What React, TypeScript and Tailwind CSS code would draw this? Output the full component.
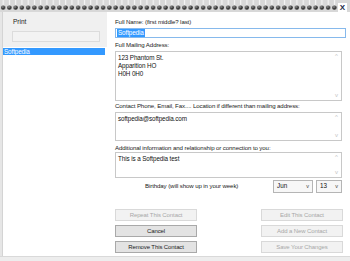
import { ReactNode } from 'react';

const Spiral = () => (
  <svg width="338" height="12" className="block">
    <defs>
      <radialGradient id="ring" cx="40%" cy="35%" r="70%">
        <stop offset="0%" stopColor="#9a9a9a" />
        <stop offset="60%" stopColor="#333" />
        <stop offset="100%" stopColor="#1a1a1a" />
      </radialGradient>
      <pattern id="wire" width="6.25" height="12" patternUnits="userSpaceOnUse">
        <rect width="6.25" height="12" fill="#d8d8d8" />
        <rect x="2.6" y="0" width="1.2" height="5" fill="#f6f6f6" />
        <circle cx="3.1" cy="7.6" r="2.2" fill="url(#ring)" />
      </pattern>
    </defs>
    <rect width="338" height="12" fill="url(#wire)" />
  </svg>
);

const Label = ({ children, className = '' }: { children: ReactNode; className?: string }) => (
  <div className={`text-[6.1px] leading-[8px] tracking-[-0.1px] text-[#222] ${className}`}>{children}</div>
);

const Area = ({ h, lines }: { h: string; lines: string[] }) => (
  <div className={`flex ${h} w-[227px] border border-[#c8c8c8] bg-white`}>
    <div className="flex-1 px-[2px] pt-[2px] text-[6.3px] leading-[8px] tracking-[-0.1px] text-[#111]">
      {lines.map((l) => (
        <div key={l}>{l}</div>
      ))}
    </div>
    <div className="flex w-[9px] flex-col items-center justify-between py-[1px] text-[6px] leading-[7px] text-[#c4c4c4]">
      <span>^</span>
      <span>v</span>
    </div>
  </div>
);

const Btn = ({ title, off = false }: { title: string; off?: boolean }) => (
  <div
    className={`flex h-[12px] w-[82px] items-center justify-center border text-[6px] tracking-[-0.1px] ${
      off ? 'border-[#d9d9d9] bg-[#f2f2f2] text-[#a8a8a8]' : 'border-[#a9a9a9] bg-[#e3e3e3] text-[#1a1a1a]'
    }`}
  >
    {title}
  </div>
);

const Select = ({ value, w }: { value: string; w: string }) => (
  <div className={`flex h-[13px] ${w} items-center justify-between border border-[#b5b5b5] bg-[#f7f7f7] px-[3px] text-[6.3px] text-[#111]`}>
    <span>{value}</span>
    <span className="text-[5.5px] text-[#444]">v</span>
  </div>
);

const App = () => {
  return (
    <div className="flex h-[261px] w-[350px] flex-col overflow-hidden bg-white font-['Liberation_Sans',Arial,sans-serif]">
      <div className="flex h-[12px] items-start bg-[#d8d8d8]">
        <Spiral />
        <div className="mt-[3px] flex h-[10px] w-[9px] items-center justify-center bg-white text-[8px] font-bold leading-none text-[#1b2a4a]">
          X
        </div>
      </div>
      <div className="flex flex-1">
        <div className="w-[3px] border-r border-[#d4d4d4] bg-[#e6e6e6]" />
        <div className="flex w-[104px] flex-col">
          <div className="flex h-[35px] flex-col bg-[#f0f0f0]">
            <div className="pl-[10px] pt-[6px] text-[6.5px] leading-[8px] text-[#1a1a1a]">Print</div>
            <div className="ml-[9px] mt-[5px] h-[11px] w-[88px] border border-[#dcdcdc] bg-[#f3f3f3]" />
          </div>
          <div className="mt-[1px] flex h-[7px] w-[102px] items-center bg-[#3399ff] pl-[1px] text-[6.3px] tracking-[-0.1px] text-white">
            Softpedia
          </div>
        </div>
        <div className="ml-[8px] flex w-[232px] flex-col">
          <Label className="mt-[6px]">Full Name: (first middle? last)</Label>
          <div className="mt-[2px] flex h-[10px] w-[231px] items-center border border-[#86b9ec] bg-white px-[1px]">
            <span className="bg-[#3399ff] px-[1px] text-[6.3px] leading-[8px] tracking-[-0.1px] text-white">Softpedia</span>
          </div>
          <Label className="mt-[3px]">Full Mailing Address:</Label>
          <div className="mt-[2px]">
            <Area h="h-[50px]" lines={['123 Phantom St.', 'Apparition HO', 'H0H 0H0']} />
          </div>
          <Label className="mt-[1px]">Contact Phone, Email, Fax....  Location if different than mailing address:</Label>
          <div className="mt-[2px]">
            <Area h="h-[29px]" lines={['softpedia@softpedia.com']} />
          </div>
          <Label className="mt-[3px]">Additional information and relationship or connection to you:</Label>
          <div className="mt-[0px]">
            <Area h="h-[26px]" lines={['This is a Softpedia test']} />
          </div>
          <div className="mt-[1px] flex h-[14px] items-center">
            <div className="w-[158px] pl-[30px] text-[6.1px] tracking-[-0.1px] text-[#222]">Birthday (will show up in your week)</div>
            <Select value="Jun" w="w-[40px]" />
            <div className="ml-[3px]">
              <Select value="13" w="w-[26px]" />
            </div>
          </div>
          <div className="mt-[16px] flex justify-between pr-[4px]">
            <div className="flex flex-col gap-[4px]">
              <Btn title="Repeat This Contact" off />
              <Btn title="Cancel" />
              <Btn title="Remove This Contact" />
            </div>
            <div className="flex flex-col gap-[4px]">
              <Btn title="Edit This Contact" off />
              <Btn title="Add a New Contact" off />
              <Btn title="Save Your Changes" off />
            </div>
          </div>
        </div>
      </div>
      <div className="h-[5px] border-t border-[#d9d9d9] bg-[#ededed]" />
    </div>
  );
};

export default App;
